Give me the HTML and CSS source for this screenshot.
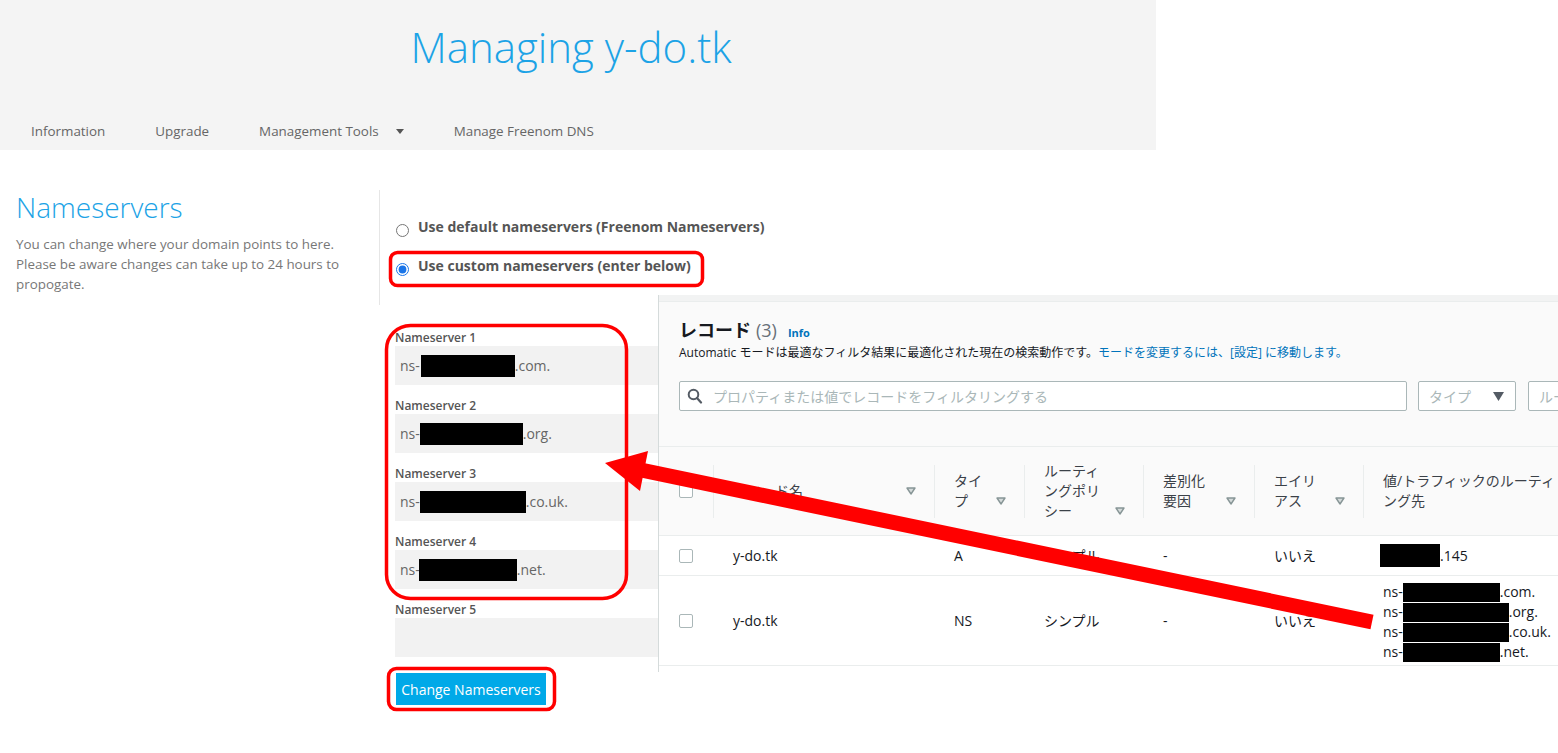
FILE: index.html
```html
<!DOCTYPE html>
<html lang="ja">
<head>
<meta charset="utf-8">
<title>Managing y-do.tk</title>
<link rel="stylesheet" href="styles.css">
</head>
<body>
<header class="site-header">
  <h1 class="site-title">Managing y-do.tk</h1>
  <nav class="site-nav">
    <a class="nav-item">Information</a>
    <a class="nav-item">Upgrade</a>
    <a class="nav-item">Management Tools<svg class="nav-caret" width="8" height="5" viewBox="0 0 8 5"><polygon points="0,0 8,0 4,5" fill="#555"/></svg></a>
    <a class="nav-item">Manage Freenom DNS</a>
  </nav>
</header>

<main class="ns-main">
  <aside class="ns-intro">
    <h2 class="ns-title">Nameservers</h2>
    <p class="ns-desc">You can change where your domain points to here. Please be aware changes can take up to 24 hours to propogate.</p>
  </aside>
  <section class="ns-form">
    <label class="ns-option"><input type="radio" name="nsmode" class="ns-radio"><span>Use default nameservers (Freenom Nameservers)</span></label>
    <label class="ns-option"><input type="radio" name="nsmode" class="ns-radio" checked><span>Use custom nameservers (enter below)</span></label>
    <div class="ns-fields">
      <div class="ns-field"><div class="ns-label">Nameserver 1</div><div class="ns-input">ns-<span class="redact redact--ns1"></span>.com.</div></div>
      <div class="ns-field"><div class="ns-label">Nameserver 2</div><div class="ns-input">ns-<span class="redact redact--ns2"></span>.org.</div></div>
      <div class="ns-field"><div class="ns-label">Nameserver 3</div><div class="ns-input">ns-<span class="redact redact--ns3"></span>.co.uk.</div></div>
      <div class="ns-field"><div class="ns-label">Nameserver 4</div><div class="ns-input">ns-<span class="redact redact--ns4"></span>.net.</div></div>
      <div class="ns-field"><div class="ns-label">Nameserver 5</div><div class="ns-input"></div></div>
    </div>
    <button class="ns-button">Change Nameservers</button>
  </section>
</main>

<div class="aws-panel">
  <div class="aws-strip"></div>
  <div class="aws-body">
    <div class="aws-head"><span class="aws-h">レコード</span><span class="aws-count">(3)</span><a class="aws-info">Info</a></div>
    <p class="aws-desc">Automatic モードは最適なフィルタ結果に最適化された現在の検索動作です。<a class="aws-link">モードを変更するには、[設定] に移動します。</a></p>
    <div class="aws-filters">
      <div class="aws-search">
        <svg class="aws-search-icon" width="16" height="16" viewBox="0 0 16 16"><circle cx="6.5" cy="6.5" r="4.8" fill="none" stroke="#545b64" stroke-width="2"/><line x1="10" y1="10" x2="14" y2="14.5" stroke="#545b64" stroke-width="2.2" stroke-linecap="round"/></svg>
        <span>プロパティまたは値でレコードをフィルタリングする</span>
      </div>
      <div class="aws-select"><span>タイプ</span><svg width="11" height="9" viewBox="0 0 11 9"><polygon points="0,0 11,0 5.5,9" fill="#545b64"/></svg></div>
      <div class="aws-select aws-select--wide"><span>ルー</span></div>
    </div>
  </div>

  <div class="aws-table">
    <div class="aws-row aws-row--head">
      <div class="aws-cell aws-cell--check"><span class="aws-check"></span></div>
      <div class="aws-th"><div class="aws-th-inner"><span>レコード名</span><span class="sort"><svg width="10" height="8" viewBox="0 0 10 8"><path d="M1 1 H9 L5 7 Z" fill="#d5dbdb" stroke="#879596" stroke-width="1.4" stroke-linejoin="round"/></svg></span></div></div>
      <div class="aws-th"><div class="aws-th-inner"><span>タイ<br>プ</span><span class="sort"><svg width="10" height="8" viewBox="0 0 10 8"><path d="M1 1 H9 L5 7 Z" fill="#d5dbdb" stroke="#879596" stroke-width="1.4" stroke-linejoin="round"/></svg></span></div></div>
      <div class="aws-th"><div class="aws-th-inner"><span>ルーティ<br>ングポリ<br>シー</span><span class="sort"><svg width="10" height="8" viewBox="0 0 10 8"><path d="M1 1 H9 L5 7 Z" fill="#d5dbdb" stroke="#879596" stroke-width="1.4" stroke-linejoin="round"/></svg></span></div></div>
      <div class="aws-th"><div class="aws-th-inner"><span>差別化<br>要因</span><span class="sort"><svg width="10" height="8" viewBox="0 0 10 8"><path d="M1 1 H9 L5 7 Z" fill="#d5dbdb" stroke="#879596" stroke-width="1.4" stroke-linejoin="round"/></svg></span></div></div>
      <div class="aws-th"><div class="aws-th-inner"><span>エイリ<br>アス</span><span class="sort"><svg width="10" height="8" viewBox="0 0 10 8"><path d="M1 1 H9 L5 7 Z" fill="#d5dbdb" stroke="#879596" stroke-width="1.4" stroke-linejoin="round"/></svg></span></div></div>
      <div class="aws-th aws-th--last"><div class="aws-th-inner"><span>値/トラフィックのルーティ<br>ング先</span></div></div>
    </div>

    <div class="aws-row aws-row--a">
      <div class="aws-cell aws-cell--check"><span class="aws-check"></span></div>
      <div class="aws-cell">y-do.tk</div>
      <div class="aws-cell">A</div>
      <div class="aws-cell">シンプル</div>
      <div class="aws-cell">-</div>
      <div class="aws-cell">いいえ</div>
      <div class="aws-cell"><span class="redact redact--ip"></span>.145</div>
    </div>

    <div class="aws-row aws-row--ns">
      <div class="aws-cell aws-cell--check"><span class="aws-check"></span></div>
      <div class="aws-cell">y-do.tk</div>
      <div class="aws-cell">NS</div>
      <div class="aws-cell">シンプル</div>
      <div class="aws-cell">-</div>
      <div class="aws-cell">いいえ</div>
      <div class="aws-cell aws-cell--values">
        <div class="aws-values">
          <div class="aws-value">ns-<span class="redact redact--v1"></span>.com.</div>
          <div class="aws-value">ns-<span class="redact redact--v2"></span>.org.</div>
          <div class="aws-value">ns-<span class="redact redact--v2"></span>.co.uk.</div>
          <div class="aws-value">ns-<span class="redact redact--v1"></span>.net.</div>
        </div>
      </div>
    </div>
  </div>
</div>

<svg class="annotations" width="1558" height="753" viewBox="0 0 1558 753">
  <g fill="none" stroke="#ff0000" stroke-width="3.5">
    <rect x="390.5" y="252.5" width="312" height="33" rx="7"/>
    <rect x="386.5" y="325.5" width="240" height="273" rx="24"/>
    <rect x="388.5" y="668.5" width="166" height="41" rx="8"/>
  </g>
  <line x1="1372" y1="622" x2="641" y2="470" stroke="#ff0000" stroke-width="15"/>
  <polygon points="605,463 648,451 640,491" fill="#ff0000"/>
</svg>
</body>
</html>
```

FILE: styles.css
```css
* { box-sizing: border-box; }
html, body { margin: 0; padding: 0; }
body {
  position: relative;
  width: 1558px;
  height: 753px;
  overflow: hidden;
  background: #fff;
  color: #555;
  font-family: "Open Sans", "Noto Sans CJK JP", sans-serif;
}

/* ---------- Freenom header ---------- */
.site-header {
  width: 1156px;
  height: 150px;
  background: #f4f4f4;
  padding-top: 17px;
}
.site-title {
  margin: 0;
  padding-right: 14px;
  text-align: center;
  font-size: 42px;
  font-weight: 300;
  line-height: 60px;
  color: #1ca3e6;
}
.site-nav {
  display: flex;
  gap: 50px;
  margin-top: 44px;
  padding-left: 31px;
  font-size: 13.4px;
  line-height: 20px;
  color: #666;
}
.nav-item { display: flex; align-items: center; }
.nav-caret { margin-left: 17px; }

/* ---------- Nameservers ---------- */
.ns-main {
  display: flex;
  align-items: flex-start;
  padding-top: 40px;
}
.ns-intro {
  width: 380px;
  height: 115px;
  flex: 0 0 380px;
  padding-left: 16px;
  border-right: 1px solid #e6e6e6;
}
.ns-title {
  margin: 0;
  font-size: 28px;
  font-weight: 300;
  line-height: 34px;
  color: #1ca3e6;
}
.ns-desc {
  margin: 10px 0 0;
  max-width: 345px;
  font-size: 13.4px;
  line-height: 20px;
  color: #777;
}
.ns-form {
  padding-left: 15px;
  padding-top: 27px;
}
.ns-option {
  display: flex;
  align-items: flex-start;
  gap: 9px;
  margin-bottom: 19px;
  font-size: 14px;
  font-weight: 700;
  line-height: 20px;
  color: #555;
}
.ns-radio {
  width: 13px;
  height: 13px;
  margin: 7px 0 0 1px;
  accent-color: #1a75e8;
}
.ns-fields { margin-top: 54px; }
.ns-field { margin-bottom: 13px; }
.ns-label {
  font-size: 12px;
  font-weight: 600;
  line-height: 16px;
  color: #555;
}
.ns-input {
  display: flex;
  align-items: center;
  width: 700px;
  height: 39px;
  padding-left: 5px;
  background: #f2f2f2;
  font-size: 14px;
  color: #666;
}
.redact {
  display: inline-block;
  background: #000;
}
.redact--ns1 { width: 94px; height: 22px; margin-left: 1px; }
.redact--ns2 { width: 103px; height: 22px; }
.redact--ns3 { width: 106px; height: 22px; }
.redact--ns4 { width: 98px; height: 22px; margin-left: -1px; }
.ns-button {
  display: block;
  width: 150px;
  height: 32px;
  margin-top: 16px;
  margin-left: 1px;
  padding: 0;
  border: 0;
  background: #00a9e8;
  color: #fff;
  font-family: inherit;
  font-size: 14px;
}

/* ---------- AWS pasted panel ---------- */
.aws-panel {
  position: absolute;
  left: 658px;
  top: 295px;
  width: 900px;
  height: 377px;
  overflow: hidden;
  border-left: 1px solid #d5dbdb;
  background: #fff;
  color: #16191f;
  font-family: "Open Sans", "Noto Sans CJK JP", sans-serif;
}
.aws-strip {
  height: 7px;
  background: #f2f3f3;
  border-bottom: 1px solid #eaeded;
}
.aws-body {
  background: #fafafa;
  padding: 16px 0 35px 20px;
}
.aws-head {
  display: flex;
  align-items: baseline;
  height: 24px;
  line-height: 24px;
  white-space: nowrap;
}
.aws-h { font-size: 18px; font-weight: 700; }
.aws-count { font-size: 18px; color: #687078; margin-left: 5px; }
.aws-info { font-size: 11px; font-weight: 700; color: #0073bb; margin-left: 11px; }
.aws-desc {
  margin: 3px 0 0;
  font-size: 12px;
  line-height: 16px;
  white-space: nowrap;
}
.aws-link { color: #0073bb; }
.aws-filters {
  display: flex;
  gap: 11px;
  height: 30px;
  margin-top: 20px;
}
.aws-search {
  display: flex;
  align-items: center;
  gap: 10px;
  flex: 0 0 728px;
  padding-left: 7px;
  border: 1px solid #aab7b8;
  border-radius: 2px;
  background: #fff;
  font-size: 14px;
  color: #aab7b8;
  white-space: nowrap;
}
.aws-select {
  display: flex;
  align-items: center;
  justify-content: space-between;
  flex: 0 0 98px;
  padding: 0 11px 0 10px;
  border: 1px solid #aab7b8;
  border-radius: 2px;
  background: #fff;
  font-size: 14px;
  color: #aab7b8;
  white-space: nowrap;
  overflow: hidden;
}
.aws-select--wide { flex: 0 0 40px; margin-left: 1px; }

.aws-row {
  display: grid;
  grid-template-columns: 54px 221px 90px 119px 111px 109px 196px;
  border-bottom: 1px solid #eaeded;
  font-size: 14px;
  line-height: 20px;
}
.aws-row--head {
  height: 90px;
  background: #fafafa;
  border-top: 1px solid #eaeded;
  color: #3b4148;
}
.aws-row--a { height: 40px; background: #fff; }
.aws-row--ns { height: 90px; background: #fff; }
.aws-cell {
  display: flex;
  align-items: center;
  padding-left: 20px;
  white-space: nowrap;
}
.aws-check {
  display: block;
  width: 14px;
  height: 14px;
  border: 1px solid #aab7b8;
  border-radius: 2px;
  background: #fff;
}
.aws-th {
  display: flex;
  align-items: center;
  align-self: center;
  height: 53px;
  padding: 0 18px 0 19px;
  border-left: 1px solid #eaeded;
  white-space: nowrap;
}
.aws-th-inner {
  display: flex;
  align-items: flex-end;
  justify-content: space-between;
  width: 100%;
}
.sort {
  display: flex;
  align-items: center;
  height: 20px;
}
.redact--ip { width: 60px; height: 23px; margin-left: -3px; }
.aws-cell--values { padding-top: 3px; }
.aws-value {
  display: flex;
  align-items: center;
  height: 20px;
}
.redact--v1 { width: 97px; height: 19px; }
.redact--v2 { width: 106px; height: 19px; }

/* ---------- annotation overlay ---------- */
.annotations {
  position: absolute;
  left: 0;
  top: 0;
  pointer-events: none;
}
```
